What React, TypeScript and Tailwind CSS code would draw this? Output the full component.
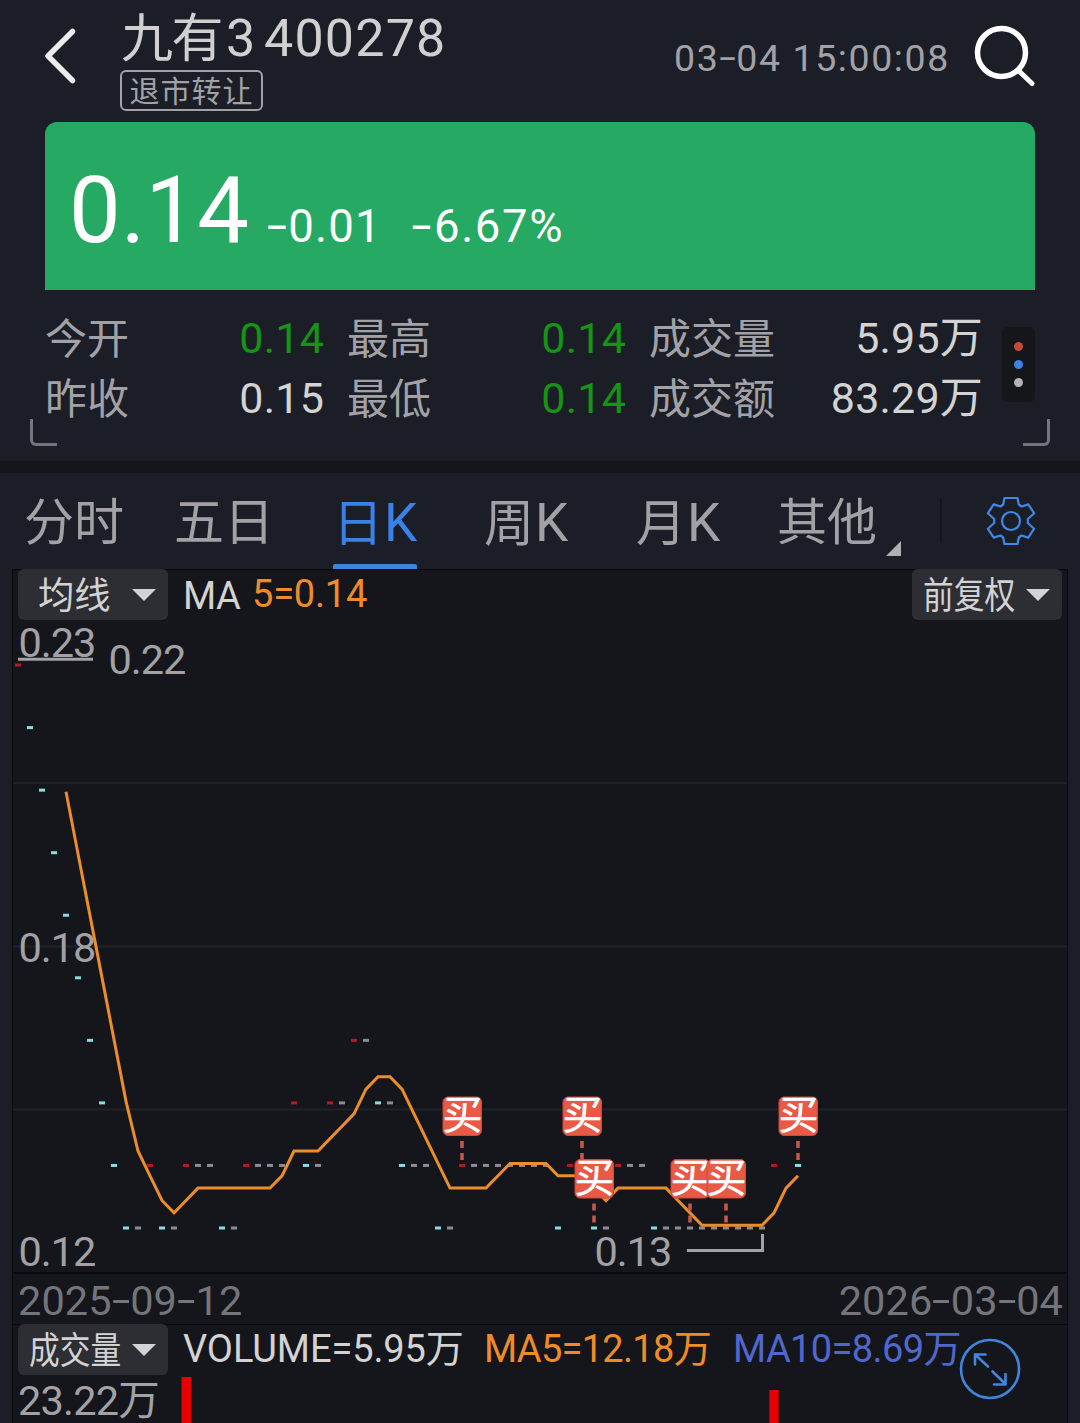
import React from "react";

const RED = "#b01c20";
const CYAN = "#86dede";
const GRAY = "#8b8c96";

const COLORS: Record<string, string> = { r: RED, c: CYAN, g: GRAY };

// Daily closes in cents with the colour of each tick: r = up, c = down, g = flat.
const DAYS =
  "22r 21c 20c 19c 18c 17c 16c 15c 14c 13c 13g 14r 13c 13g 14r 14g 14g 13c 13g 14r 14g 14g 14g 15r 14c 14g 15r 15g 16r 16g 15c 15g 14c 14g 14g 13c 13g 14r 14g 14g 14g 14g 14g 14g 14g 13c 14r 14g 13c 13g 14r 14g 14g 13c 13g 13g 13g 13g 13g 13g 13g 13g 13g 14r 15r 14c"
    .split(" ")
    .map((d) => ({ close: parseInt(d, 10), kind: d.slice(-1) }));

const dayX = (i: number) => 18 + 12 * i;
const closeY = (v: number) => 1228 - (v - 13) * 62.55;
const maY = (v: number) => 1225.3 - (v - 13) * 61.93;

const MA5 = DAYS.map((_, i) => i)
  .slice(4)
  .map((i) => {
    const avg = DAYS.slice(i - 4, i + 1).reduce((s, d) => s + d.close, 0) / 5;
    return `${dayX(i)},${maY(avg).toFixed(1)}`;
  })
  .join(" ");

const BUYS = [
  { x: 462, y: 1096.5 },
  { x: 582, y: 1096.5 },
  { x: 798, y: 1096.5 },
  { x: 594, y: 1159 },
  { x: 690, y: 1159 },
  { x: 726, y: 1159 },
];

function Dash({ className = "w-[0.445em]" }: { className?: string }) {
  return <span className={"inline-block -translate-y-[0.03em] scale-x-[1.6] text-center tracking-normal " + className}>-</span>;
}

function Chip({ label, squeeze }: { label: string; squeeze?: boolean }) {
  return (
    <div className="flex h-[51px] w-[150px] shrink-0 items-center justify-between rounded-[6px] bg-[#2d2e33] pr-3 text-[#d3d3d3]">
      <div className={squeeze ? "ml-[11px] w-[92px] pt-1" : "ml-[20px] w-[80px] pt-1"}>
        <div className={"origin-left whitespace-nowrap text-[37px] leading-[50px] " + (squeeze ? "scale-x-[0.83]" : "scale-x-[0.98]")}>{label}</div>
      </div>
      <svg width="24" height="12" viewBox="0 0 24 12" className="shrink-0">
        <path d="M0 0H24L12 12Z" fill="#d3d3d3" />
      </svg>
    </div>
  );
}

function Stat({ label, value, color }: { label: string; value: string; color: string }) {
  return (
    <div className="flex h-[60px] items-center justify-between whitespace-nowrap leading-[60px]">
      <span className="pt-[3px] text-[42px] text-[#a2a2a6]">{label}</span>
      <span className={"text-[43px] tracking-[0.2px] " + color}>{value}</span>
    </div>
  );
}

function Header() {
  return (
    <header className="flex h-[122px] items-start pl-[44px]">
      <svg width="34" height="58" viewBox="0 0 34 58" className="mt-[27px] shrink-0" fill="none">
        <path d="M28.500 4.500L4 29L28.500 53.500" stroke="#ececec" strokeWidth="5.500" strokeLinecap="round" strokeLinejoin="round" />
      </svg>
      <div className="ml-[42px] w-[500px] pt-3">
        <div className="flex h-[52px] whitespace-nowrap text-[52px] leading-[52px] text-[#d0d0d0]">
          <span className="w-[105px] pl-[1px] pt-[2px] tracking-[-1.5px]">九有</span>
          <span className="w-[39px] pl-[1px] pt-[1px]">3</span>
          <span className="pt-[1px] tracking-[1.2px]">400278</span>
        </div>
        <div className="mt-[6px] flex h-[41px] w-[143px] items-center justify-center rounded-[6px] border-2 border-[#a2a2a6] pt-[2px] text-[30px] leading-none tracking-[1px] text-[#a2a2a6]">
          退市转让
        </div>
      </div>
      <div className="ml-[54px] mt-[33.500px] w-[280px] whitespace-nowrap text-[37.500px] leading-[48px] tracking-[1.600px] text-[#a2a2a6]">
        03
        <Dash className="w-[0.45em]" />
        04 15:00:08
      </div>
      <svg width="64" height="64" viewBox="0 0 64 64" className="ml-[18px] mt-[24px] shrink-0" fill="none" stroke="#fff" strokeLinecap="round">
        <circle cx="29.500" cy="28.500" r="24" strokeWidth="5.500" />
        <path d="M47 47L60 59.500" strokeWidth="5" />
      </svg>
    </header>
  );
}

function PriceBanner() {
  return (
    <section className="mx-[45px] flex h-[168px] items-start whitespace-nowrap rounded-t-[12px] bg-[#26a963] text-white">
      <span className="ml-[24px] mt-[39px] w-[197px] text-[92px] leading-[100px] tracking-[0.200px]">0.14</span>
      <span className="mt-[77px] w-[143px] text-[45.500px] leading-[56px] tracking-[1.200px]">
        <Dash className="w-[0.49em]" />
        0.01
      </span>
      <span className="mt-[77px] text-[45.500px] leading-[56px] tracking-[1.600px]">
        <Dash className="w-[0.55em]" />
        6.67%
      </span>
    </section>
  );
}

function Stats() {
  return (
    <section className="relative flex h-[171px] pl-[45px] pt-[18px]">
      <div className="w-[279px]">
        <Stat label="今开" value="0.14" color="text-[#159415]" />
        <Stat label="昨收" value="0.15" color="text-[#d3d3d3]" />
      </div>
      <div className="ml-[23px] w-[279px]">
        <Stat label="最高" value="0.14" color="text-[#159415]" />
        <Stat label="最低" value="0.14" color="text-[#159415]" />
      </div>
      <div className="ml-[23px] w-[334px]">
        <Stat label="成交量" value="5.95万" color="text-[#d3d3d3]" />
        <Stat label="成交额" value="83.29万" color="text-[#d3d3d3]" />
      </div>
      <div className="ml-[19px] mt-[19px] flex h-[75px] w-[33px] flex-col items-center justify-center gap-[9px] rounded-[6px] bg-[#15161a]">
        <i className="size-[9px] rounded-full bg-[#c84936]" />
        <i className="size-[9px] rounded-full bg-[#3b82e8]" />
        <i className="size-[9px] rounded-full bg-[#b4b4b8]" />
      </div>
      <i className="absolute bottom-[15px] left-[30px] h-[27px] w-[27px] rounded-bl-[6px] border-b-[3px] border-l-[3px] border-[#74757b]" />
      <i className="absolute bottom-[15px] right-[30px] h-[27px] w-[27px] rounded-br-[6px] border-b-[3px] border-r-[3px] border-[#74757b]" />
    </section>
  );
}

function Tabs() {
  return (
    <nav className="flex h-[96px] whitespace-nowrap pl-[24px] text-[50px] leading-[101px] text-[#a2a2a6]">
      <span className="w-[150px]">分时</span>
      <span className="w-[159px]">五日</span>
      <span className="relative mr-[67px] w-[84px] text-[#3b82e8]">
        日<span className="pl-px text-[53px]">K</span>
        <i className="absolute bottom-0 left-0 h-[5px] w-[84px] rounded-t-[2px] bg-[#3f82e0]" />
      </span>
      <span className="w-[152px]">周<span className="pl-px text-[53px]">K</span></span>
      <span className="w-[141px]">月<span className="pl-px text-[53px]">K</span></span>
      <span className="w-[109px]">其他</span>
      <svg width="15" height="15" viewBox="0 0 15 15" className="mt-[68px] shrink-0">
        <path d="M15 0V15H0Z" fill="#b0b0b2" />
      </svg>
      <i className="ml-[39px] mt-[25px] h-[45px] w-[2px] bg-[#15161b]" />
      <svg width="52" height="52" viewBox="-26 -26 52 52" className="ml-[43px] mt-[22px] shrink-0" fill="none" stroke="#4287e6" strokeWidth="2.200" strokeLinejoin="round">
        <path d="M-6.500 -23H6.500L7.800 -16.500L10.500 -14.500L17.300 -16.600L23.200 -7.700L16.800 -2V2L23.200 7.700L17.300 16.600L10.500 14.500L7.800 16.500L6.500 23H-6.500L-7.800 16.500L-10.500 14.500L-17.300 16.600L-23.200 7.700L-16.800 2V-2L-23.200 -7.700L-17.300 -16.600L-10.500 -14.500L-7.800 -16.500Z" />
        <circle r="9" />
      </svg>
    </nav>
  );
}

function PriceChart() {
  return (
    <svg width="1054" height="652" viewBox="13 620 1054 652" className="block overflow-visible">
      <g stroke="#212227" strokeWidth="2">
        <path d="M13 783H1067M13 946.500H1067M13 1109.500H1067" />
      </g>
      <g fill="#a2a2a6" fontSize="41.500" letterSpacing="-1">
        <text x="18.500" y="657">0.23</text>
        <text x="108.500" y="674">0.22</text>
        <text x="18.500" y="962">0.18</text>
        <text x="18.500" y="1266">0.12</text>
        <text x="594.500" y="1266">0.13</text>
      </g>
      <path d="M18 659.300H93M687 1250.500H762.500V1234" stroke="#a2a2a6" strokeWidth="3" fill="none" />
      {DAYS.map((d, i) => (
        <rect key={i} x={dayX(i) - 3} y={closeY(d.close) - 1.5} width="6" height="3" fill={COLORS[d.kind]} />
      ))}
      <polyline points={MA5} fill="none" stroke="#ec8d2c" strokeWidth="3" />
      {BUYS.map((b) => (
        <g key={b.x}>
          <path d={`M${b.x} ${b.y + 44.5}v19`} stroke="#c4594d" strokeWidth="3.500" strokeDasharray="7 5" />
          <rect x={b.x - 19} y={b.y + 0.5} width="38.500" height="38.500" rx="5" fill="#ea5945" stroke="#c64c3f" strokeWidth="1" />
          <text x={b.x + 0.5} y={b.y + 32.5} fontSize="40" textAnchor="middle" fill="#fff" stroke="#fff" strokeWidth="0.500">
            买
          </text>
        </g>
      ))}
    </svg>
  );
}

function VolumeChart() {
  return (
    <div className="flex h-[48px] items-start">
      <div className="ml-[5px] mt-[4px] w-[163px] whitespace-nowrap text-[41.500px] leading-[44px] tracking-[-0.800px] text-[#a2a2a6]">23.22万</div>
      <svg width="870" height="48" viewBox="181 1375 870 48" className="block shrink-0">
        <path d="M181.500 1377h9.500v46h-9.500zM769.300 1390h9.300v33h-9.300z" fill="#e60000" />
      </svg>
    </div>
  );
}

export default function App() {
  return (
    <div className="h-[1423px] w-[1080px] overflow-hidden bg-[#1b1e27] font-['Roboto','Noto_Sans_CJK_SC',sans-serif]">
      <Header />
      <PriceBanner />
      <Stats />
      <div className="h-[12px] bg-[#15161b]" />
      <Tabs />
      <main className="mx-[12px] h-[854px] border-x border-[#090a0d] bg-[#15161b]">
        <div className="flex h-[51px] whitespace-nowrap pl-[5px] pr-[5px] shadow-[inset_0_1px_0_#090a0d]">
          <Chip label="均线" />
          <span className="ml-[15px] w-[69px] text-[38px] leading-[54px] tracking-[-0.500px] text-[#d3d3d3]">MA</span>
          <span className="text-[38px] leading-[50px] tracking-[-0.200px] text-[#f08c28]">5=0.14</span>
          <span className="flex-1" />
          <Chip label="前复权" squeeze />
        </div>
        <PriceChart />
        <div className="flex h-[52px] justify-between border-t-2 border-[#090a0d] pl-[5px] pr-[4px] text-[41.500px] leading-[53px] tracking-[0.100px] text-[#74757a]">
          <span>2025<Dash />09<Dash />12</span>
          <span>2026<Dash />03<Dash />04</span>
        </div>
        <div className="relative flex h-[51px] whitespace-nowrap pl-[5px] text-[38px] leading-[50px] shadow-[inset_0_1px_0_#090a0d]">
          <Chip label="成交量" squeeze />
          <span className="ml-[15px] w-[301px] tracking-[-0.100px] text-[#d3d3d3]">VOLUME=5.95万</span>
          <span className="w-[249px] tracking-[-0.700px] text-[#f08c28]">MA5=12.18万</span>
          <span className="tracking-[-0.600px] text-[#5068cd]">MA10=8.69万</span>
          <svg width="62" height="62" viewBox="-31 -31 62 62" className="absolute left-[946px] top-[14px]" fill="none" stroke="#3f86dc" strokeWidth="2.600" strokeLinecap="round" strokeLinejoin="round">
            <circle r="29" />
            <path d="M-2 -2.500L-15 -14.500M-15 -4.500V-14.500H-4.500M2.500 2.500L15.500 15M15.500 5V15.500H4" />
          </svg>
        </div>
        <VolumeChart />
      </main>
    </div>
  );
}
